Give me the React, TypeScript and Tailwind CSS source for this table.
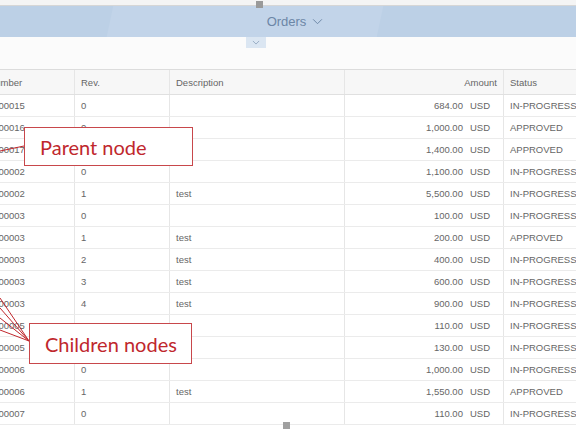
import React from 'react'

type Row = {
  id: string
  rev: string
  desc: string
  amount: string
  status: string
}

const rows: Row[] = [
  { id: '4500000015', rev: '0', desc: '', amount: '684.00', status: 'IN-PROGRESS' },
  { id: '4500000016', rev: '0', desc: '', amount: '1,000.00', status: 'APPROVED' },
  { id: '4500000017', rev: '', desc: '', amount: '1,400.00', status: 'APPROVED' },
  { id: '4500000002', rev: '0', desc: '', amount: '1,100.00', status: 'IN-PROGRESS' },
  { id: '4500000002', rev: '1', desc: 'test', amount: '5,500.00', status: 'IN-PROGRESS' },
  { id: '4500000003', rev: '0', desc: '', amount: '100.00', status: 'IN-PROGRESS' },
  { id: '4500000003', rev: '1', desc: 'test', amount: '200.00', status: 'APPROVED' },
  { id: '4500000003', rev: '2', desc: 'test', amount: '400.00', status: 'IN-PROGRESS' },
  { id: '4500000003', rev: '3', desc: 'test', amount: '600.00', status: 'IN-PROGRESS' },
  { id: '4500000003', rev: '4', desc: 'test', amount: '900.00', status: 'IN-PROGRESS' },
  { id: '4500000005', rev: '', desc: '', amount: '110.00', status: 'IN-PROGRESS' },
  { id: '4500000005', rev: '', desc: '', amount: '130.00', status: 'IN-PROGRESS' },
  { id: '4500000006', rev: '0', desc: '', amount: '1,000.00', status: 'IN-PROGRESS' },
  { id: '4500000006', rev: '1', desc: 'test', amount: '1,550.00', status: 'APPROVED' },
  { id: '4500000007', rev: '0', desc: '', amount: '110.00', status: 'IN-PROGRESS' },
]

const cols = 'grid grid-cols-[109px_95px_175px_159px_110px]'
const cell = 'border-r border-[#e6e6e6] px-[6px] pt-[2px] flex items-center whitespace-nowrap overflow-hidden'

function Chevron({ className }: { className?: string }) {
  return (
    <svg viewBox="0 0 12 8" className={className} fill="none" stroke="currentColor" strokeWidth="1.1">
      <path d="M1 1.5 L6 6.5 L11 1.5" />
    </svg>
  )
}

export default function App() {
  return (
    <div
      className="relative w-[576px] h-[432px] overflow-hidden bg-white text-[#666]"
      style={{ fontFamily: '"Liberation Sans", Arial, sans-serif' }}
    >
      {/* top strip */}
      <div className="h-[6px] bg-[#f4f4f4] border-b border-[#d6d6d6]" />

      {/* header bar */}
      <div className="relative h-[31px] bg-[#bcd0e6] flex items-center justify-center overflow-hidden">
        <div className="absolute left-[110px] top-0 h-full w-[270px] bg-[#c2d4e9] -skew-x-12" />
        <div className="relative flex items-center gap-[6px] pl-[14px] text-[#6c86a6] text-[13px]">
          <span>Orders</span>
          <Chevron className="w-[11px] h-[7px]" />
        </div>
      </div>

      {/* sub header with collapse tab */}
      <div className="h-[32px] bg-[#fbfbfb] flex justify-center">
        <div className="ml-[-64px] w-[20px] h-[11px] bg-[#dbe6f2] flex items-center justify-center text-[#7e95b2]">
          <Chevron className="w-[8px] h-[5px]" />
        </div>
      </div>

      {/* table */}
      <div className="ml-[-34px] text-[9.5px] border-t border-[#dcdcdc]">
        <div className={`${cols} h-[25px] bg-[#f7f7f7] border-b border-[#e0e0e0]`}>
          <div className={cell}>PO Number</div>
          <div className={cell}>Rev.</div>
          <div className={cell}>Description</div>
          <div className={`${cell} justify-end`}>Amount</div>
          <div className={cell}>Status</div>
        </div>
        {rows.map((r, i) => (
          <div key={i} className={`${cols} h-[22px] border-b border-[#ebebeb]`}>
            <div className={cell}>{r.id}</div>
            <div className={cell}>{r.rev}</div>
            <div className={cell}>{r.desc}</div>
            <div className={`${cell} justify-end pr-[13px] gap-[7px]`}>
              <span>{r.amount}</span>
              <span>USD</span>
            </div>
            <div className={cell}>{r.status}</div>
          </div>
        ))}
      </div>

      {/* resize handles */}
      <div className="absolute left-[256px] top-[1px] w-[7px] h-[7px] bg-[#9a9a9a]" />
      <div className="absolute left-[283px] top-[422px] w-[7px] h-[7px] bg-[#a0a0a0]" />

      {/* annotation leader lines */}
      <svg className="absolute left-0 top-0" width="576" height="432" fill="none" stroke="#c0272d" strokeWidth="1">
        <path d="M24 146 L0 151" />
        <path d="M29 341 L0 298" />
        <path d="M29 341 L0 308" />
        <path d="M29 341 L0 318" />
        <path d="M29 341 L0 330" />
      </svg>

      {/* callouts */}
      <div
        className="absolute left-[24px] top-[127px] w-[169px] h-[39px] bg-white border border-[#c8474b] flex items-center pl-[15px] text-[20px] text-[#c0272d]"
        style={{ fontFamily: 'Lato, "Open Sans", sans-serif' }}
      >
        Parent node
      </div>
      <div
        className="absolute left-[29px] top-[323px] w-[163px] h-[41px] bg-white border border-[#c8474b] flex items-center pl-[15px] text-[20px] text-[#c0272d]"
        style={{ fontFamily: 'Lato, "Open Sans", sans-serif' }}
      >
        Children nodes
      </div>
    </div>
  )
}
